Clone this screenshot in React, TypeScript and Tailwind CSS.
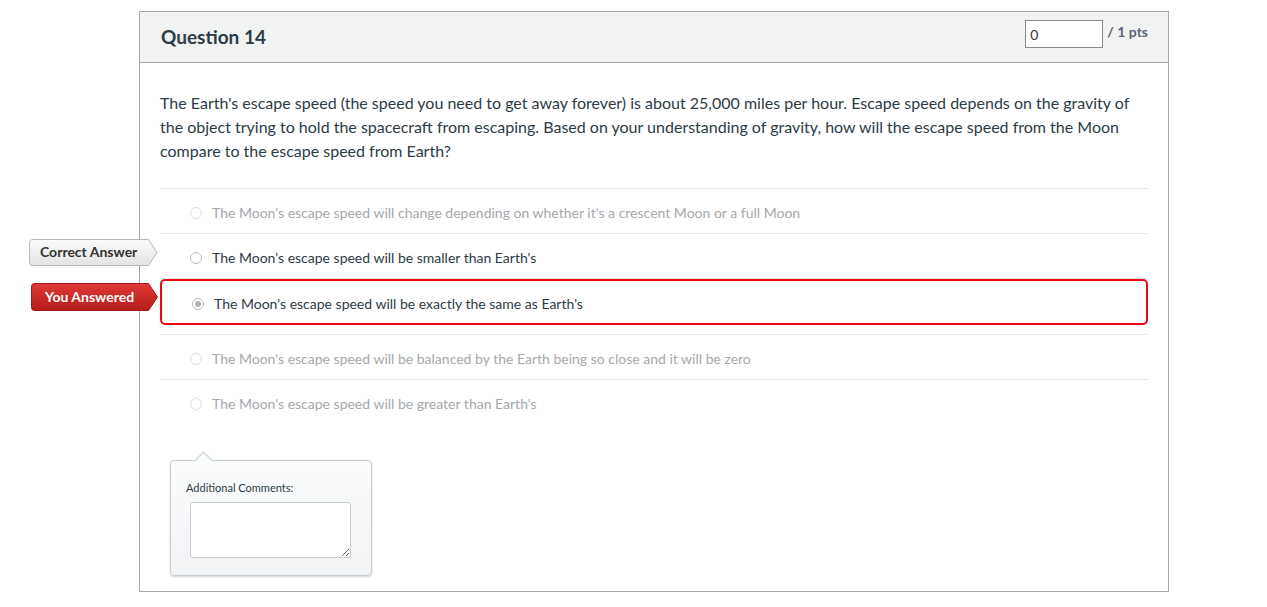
import React from "react";

const answers = [
  { text: "The Moon's escape speed will change depending on whether it's a crescent Moon or a full Moon", state: "dim" },
  { text: "The Moon's escape speed will be smaller than Earth's", state: "correct" },
  { text: "The Moon's escape speed will be exactly the same as Earth's", state: "answered" },
  { text: "The Moon's escape speed will be balanced by the Earth being so close and it will be zero", state: "dim" },
  { text: "The Moon's escape speed will be greater than Earth's", state: "dim" },
];

function Radio({ checked, dim }: { checked?: boolean; dim?: boolean }) {
  return (
    <span
      className={`inline-flex h-[12px] w-[12px] shrink-0 items-center justify-center rounded-full border ${
        dim ? "border-[#dcdcdc] bg-white" : "border-[#bdbdbd] bg-white"
      }`}
    >
      {checked && <span className="h-[6px] w-[6px] rounded-full bg-[#b5b5b5]" />}
    </span>
  );
}

function CorrectLabel() {
  return (
    <div className="absolute left-[-131px] top-[5px] h-[27px] w-[129px]">
      <svg width="129" height="27" className="absolute left-0 top-0">
        <defs>
          <linearGradient id="cg" x1="0" y1="0" x2="0" y2="1">
            <stop offset="0" stopColor="#fbfbfb" />
            <stop offset="1" stopColor="#e3e3e3" />
          </linearGradient>
        </defs>
        <path
          d="M3.5,0.5 L119.5,0.5 L128,13.5 L119.5,26.5 L3.5,26.5 Q0.5,26.5 0.5,23.5 L0.5,3.5 Q0.5,0.5 3.5,0.5 Z"
          fill="url(#cg)"
          stroke="#b8b8b8"
        />
      </svg>
      <span className="relative block pl-[11px] text-[14px] font-bold leading-[26px] text-[#333]">Correct Answer</span>
    </div>
  );
}

function AnsweredLabel() {
  return (
    <div className="absolute left-[-129px] top-[4px] h-[28px] w-[127px]">
      <svg width="127" height="28" className="absolute left-0 top-0">
        <defs>
          <linearGradient id="rg" x1="0" y1="0" x2="0" y2="1">
            <stop offset="0" stopColor="#e03a36" />
            <stop offset="1" stopColor="#b41d1b" />
          </linearGradient>
        </defs>
        <path
          d="M3.5,0.5 L117.5,0.5 L126.5,14 L117.5,27.5 L3.5,27.5 Q0.5,27.5 0.5,24.5 L0.5,3.5 Q0.5,0.5 3.5,0.5 Z"
          fill="url(#rg)"
          stroke="#a31816"
        />
      </svg>
      <span className="relative block pl-[14px] text-[14px] font-bold leading-[27px] text-white">You Answered</span>
    </div>
  );
}

export default function App() {
  return (
    <div className="min-h-[607px] bg-white pt-[11px] font-['Lato','Noto_Sans',sans-serif] text-[#2d3b45]">
      <div className="ml-[139px] w-[1030px] border border-[#a8a8a8]">
        <div className="flex h-[51px] items-start justify-between border-b border-[#a8a8a8] bg-[#f1f2f2] pl-[21px] pr-[20px]">
          <div className="self-center text-[19px] font-bold leading-[22px] text-[#2d3b45]">Question 14</div>
          <div className="flex items-start pt-[8px]">
            <div className="flex h-[28px] w-[78px] items-center border border-[#8a8a8a] bg-white pl-[4px] text-[14px] text-[#333]">0</div>
            <span className="ml-[4px] mt-[3px] text-[14px] font-bold leading-[18px] text-[#5b6670]">/ 1 pts</span>
          </div>
        </div>
        <div className="px-[20px] pb-[15px] pt-[28px]">
          <p className="text-[16px] leading-[24px] text-[#2d3b45]">
            The Earth's escape speed (the speed you need to get away forever) is about 25,000 miles per hour. Escape speed depends on the gravity of the object trying to hold the spacecraft from escaping. Based on your understanding of gravity, how will the escape speed from the Moon compare to the escape speed from Earth?
          </p>
          <div className="mt-[25px]">
            {answers.map((a, i) => {
              if (a.state === "answered") {
                return (
                  <div key={i} className="relative border-t border-[#e6e6e6] pb-[9px]">
                    <AnsweredLabel />
                    <div className="flex items-center rounded-[5px] border-2 border-[#ee0612] pb-[10px] pl-[30px] pt-[14px]">
                      <Radio checked />
                      <span className="ml-[10px] text-[14px] leading-[18px] text-[#2d3b45]">{a.text}</span>
                    </div>
                  </div>
                );
              }
              const dim = a.state === "dim";
              return (
                <div key={i} className="relative flex items-center border-t border-[#e6e6e6] pb-[11px] pl-[30px] pt-[15px]">
                  {a.state === "correct" && <CorrectLabel />}
                  <Radio dim={dim} />
                  <span className={`ml-[10px] text-[14px] leading-[18px] ${dim ? "text-[#a5a9ac]" : "text-[#2d3b45]"}`}>{a.text}</span>
                </div>
              );
            })}
          </div>
          <div className="relative ml-[10px] mt-[36px] h-[116px] w-[202px] rounded-[4px] border border-[#c3ccd3] bg-gradient-to-b from-[#fbfcfc] to-[#f1f3f5] shadow-[0_1px_2px_rgba(0,0,0,0.18)]">
            <div className="absolute left-[26px] top-[-7px] h-[13px] w-[13px] rotate-45 border-l border-t border-[#c3ccd3] bg-[#fbfcfc]" />
            <div className="relative px-[15px] pt-[20px] text-[11px] leading-[14px] text-[#2d3b45]">Additional Comments:</div>
            <textarea className="relative ml-[19px] mt-[7px] block h-[56px] w-[161px] rounded-[3px] border border-[#c7cdd1] bg-white" />
          </div>
        </div>
      </div>
    </div>
  );
}
